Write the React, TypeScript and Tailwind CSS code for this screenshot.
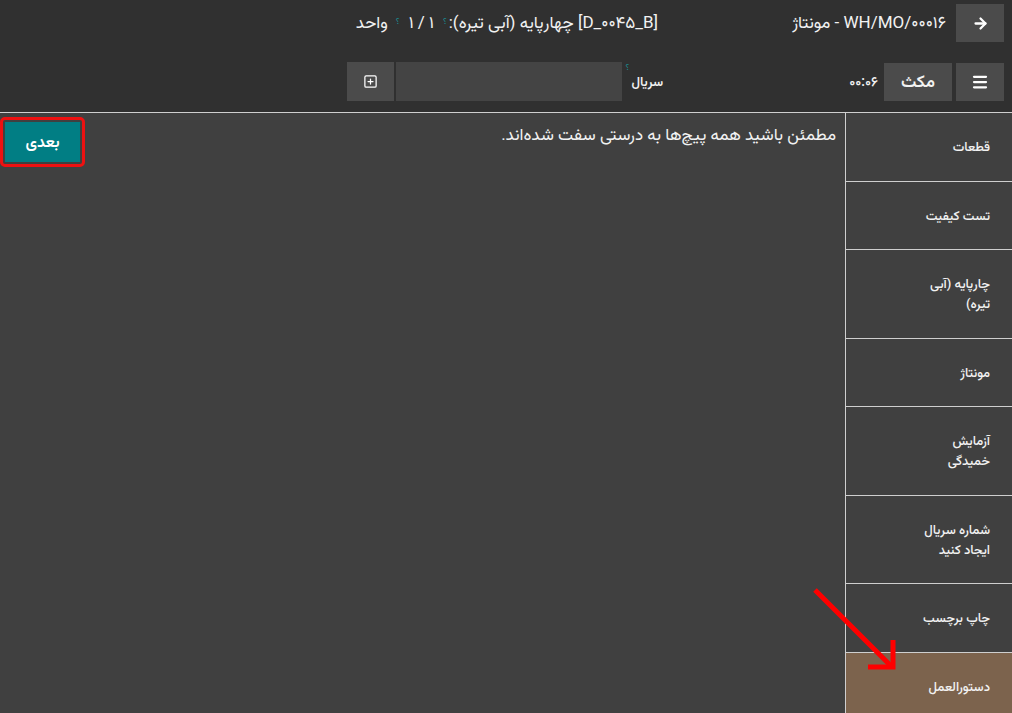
import { ArrowRight, Menu, SquarePlus } from "lucide-react";

const steps = [
  { label: "قطعات" },
  { label: "تست کیفیت" },
  { label: "چارپایه (آبی تیره)" },
  { label: "مونتاژ" },
  { label: "آزمایش خمیدگی" },
  { label: "شماره سریال ایجاد کنید" },
  { label: "چاپ برچسب" },
  { label: "دستورالعمل", active: true },
];

function Hint() {
  return <sup className="text-[9px] text-[#1a8a90] mx-[2px]">؟</sup>;
}

export default function App() {
  return (
    <div
      dir="rtl"
      className="relative w-[1012px] h-[713px] flex flex-col overflow-hidden bg-[#404040] text-[#f2f2f2]"
      style={{ fontFamily: 'Roboto, "Vazirmatn", "Noto Sans Arabic", "DejaVu Sans", sans-serif' }}
    >
      {/* header */}
      <header className="h-[113px] shrink-0 bg-[#303030] border-b border-[#cfcfcf] pt-1 pr-2">
        <div className="flex items-center h-[38px]">
          <button className="w-12 h-[38px] bg-[#4b4b4b] flex items-center justify-center text-white">
            <ArrowRight size={17} strokeWidth={3.2} />
          </button>
          <span className="mr-[10px] text-[17px]">WH/MO/۰۰۰۱۶ - مونتاژ</span>
          <span className="mr-[134px] text-[17px]">
            [D_۰۰۴۵_B] چهارپایه (آبی تیره):
            <Hint />
            <span className="mx-[7px]">۱ / ۱</span>
            <Hint />
            <span className="mr-[6px]">واحد</span>
          </span>
        </div>
        <div className="flex items-center h-[39px] mt-[20px]">
          <button className="w-12 h-[38px] bg-[#4b4b4b] flex items-center justify-center text-white">
            <Menu size={18} strokeWidth={3} />
          </button>
          <button className="mr-1 w-[68px] h-[38px] bg-[#4b4b4b] text-[17px] font-semibold">مکث</button>
          <span className="mr-[6px] text-[14px] font-medium">۰۰:۰۶</span>
          <div className="mr-[186px] w-[41px] shrink-0 flex items-start">
            <span className="text-[13px] font-semibold">سریال</span>
            <Hint />
          </div>
          <div className="w-[226px] h-[39px] bg-[#444444]" />
          <button className="mr-[2px] w-[47px] h-[39px] bg-[#4b4b4b] flex items-center justify-center text-white">
            <SquarePlus size={15} strokeWidth={2} />
          </button>
        </div>
      </header>

      <div className="flex flex-1 min-h-0">
        {/* step list */}
        <nav className="w-[167px] shrink-0 border-l border-[#cfcfcf] flex flex-col">
          {steps.map((s) => (
            <div
              key={s.label}
              className={`pr-[22px] pt-6 pb-[23.5px] border-b border-[#cfcfcf] ${s.active ? "bg-[#7c634d] flex-1" : ""}`}
            >
              <div className="max-w-[82px] text-[13px] leading-5 font-medium">{s.label}</div>
            </div>
          ))}
        </nav>

        {/* instruction */}
        <main className="flex-1 flex justify-between items-start pr-[9px] pt-[9px]">
          <p className="text-[17px] leading-6">مطمئن باشید همه پیچ‌ها به درستی سفت شده‌اند.</p>
          <div className="-mt-[5px] border-[3px] border-[#ee1111] rounded-[5px] p-[2px]">
            <button className="w-[75px] h-[40px] bg-[#017e84] text-white text-[16px] font-semibold">بعدی</button>
          </div>
        </main>
      </div>

      <svg className="absolute left-[808px] top-[585px]" width="92" height="90" viewBox="0 0 92 90">
        <line x1="7" y1="5" x2="83" y2="81" stroke="#ff0000" strokeWidth="5" />
        <path d="M85 55 V82 H60" fill="none" stroke="#ff0000" strokeWidth="5" />
      </svg>
    </div>
  );
}
